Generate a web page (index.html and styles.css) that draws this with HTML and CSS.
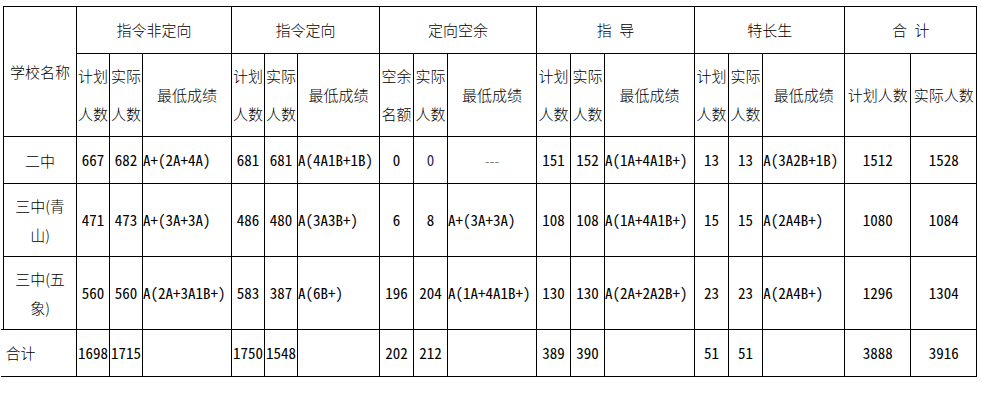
FILE: index.html
```html
<!DOCTYPE html>
<html lang="zh-CN">
<head>
<meta charset="utf-8">
<title>招生统计</title>
<link rel="stylesheet" href="styles.css">
</head>
<body>
<table class="grid">
  <colgroup>
    <col class="w73"><col class="w33"><col class="w33"><col class="w89">
    <col class="w33"><col class="w33"><col class="w82">
    <col class="w34"><col class="w34"><col class="w89">
    <col class="w34"><col class="w34"><col class="w90">
    <col class="w34"><col class="w34"><col class="w82">
    <col class="w66"><col class="w66">
  </colgroup>
  <tr class="r47">
    <td rowspan="2">学校名称</td>
    <td colspan="3">指令非定向</td>
    <td colspan="3">指令定向</td>
    <td colspan="3">定向空余</td>
    <td colspan="3">指&ensp;导</td>
    <td colspan="3">特长生</td>
    <td colspan="2">合&ensp;计</td>
  </tr>
  <tr class="r83">
    <td class="two">计划<br>人数</td><td class="two">实际<br>人数</td><td>最低成绩</td>
    <td class="two">计划<br>人数</td><td class="two">实际<br>人数</td><td>最低成绩</td>
    <td class="two">空余<br>名额</td><td class="two">实际<br>人数</td><td>最低成绩</td>
    <td class="two">计划<br>人数</td><td class="two">实际<br>人数</td><td>最低成绩</td>
    <td class="two">计划<br>人数</td><td class="two">实际<br>人数</td><td>最低成绩</td>
    <td>计划人数</td><td>实际人数</td>
  </tr>
  <tr class="r47">
    <td class="name">二中</td>
    <td class="n">667</td><td class="n">682</td><td class="g">A+(2A+4A)</td>
    <td class="n">681</td><td class="n">681</td><td class="g">A(4A1B+1B)</td>
    <td class="n">0</td><td class="n tint">0</td><td class="soft">---</td>
    <td class="n">151</td><td class="n">152</td><td class="g">A(1A+4A1B+)</td>
    <td class="n">13</td><td class="n">13</td><td class="g">A(3A2B+1B)</td>
    <td class="n">1512</td><td class="n">1528</td>
  </tr>
  <tr class="r73">
    <td class="name">三中(青山)</td>
    <td class="n">471</td><td class="n">473</td><td class="g">A+(3A+3A)</td>
    <td class="n">486</td><td class="n">480</td><td class="g">A(3A3B+)</td>
    <td class="n">6</td><td class="n">8</td><td class="g">A+(3A+3A)</td>
    <td class="n">108</td><td class="n">108</td><td class="g">A(1A+4A1B+)</td>
    <td class="n">15</td><td class="n">15</td><td class="g">A(2A4B+)</td>
    <td class="n">1080</td><td class="n">1084</td>
  </tr>
  <tr class="r73">
    <td class="name">三中(五象)</td>
    <td class="n">560</td><td class="n">560</td><td class="g">A(2A+3A1B+)</td>
    <td class="n">583</td><td class="n">387</td><td class="g">A(6B+)</td>
    <td class="n">196</td><td class="n">204</td><td class="g">A(1A+4A1B+)</td>
    <td class="n">130</td><td class="n">130</td><td class="g">A(2A+2A2B+)</td>
    <td class="n">23</td><td class="n">23</td><td class="g">A(2A4B+)</td>
    <td class="n">1296</td><td class="n">1304</td>
  </tr>
  <tr class="r47">
    <td class="total">合计</td>
    <td class="n">1698</td><td class="n">1715</td><td></td>
    <td class="n">1750</td><td class="n">1548</td><td></td>
    <td class="n">202</td><td class="n">212</td><td></td>
    <td class="n">389</td><td class="n">390</td><td></td>
    <td class="n">51</td><td class="n">51</td><td></td>
    <td class="n">3888</td><td class="n">3916</td>
  </tr>
</table>
</body>
</html>
```
FILE: styles.css
```css
html, body {
  margin: 0;
  padding: 0;
  background: #ffffff;
}

.grid {
  border-collapse: collapse;
  table-layout: fixed;
  width: 974px;
  margin: 6px 0 0 3px;
  font-family: "Noto Sans CJK SC", "Noto Sans", sans-serif;
  font-size: 15px;
  font-weight: 300;
  color: #000000;
}

.grid td {
  border: 1px solid #000000;
  padding: 0;
  text-align: center;
  vertical-align: middle;
  white-space: nowrap;
  overflow: hidden;
  line-height: 18px;
}

.w73 { width: 73px; }
.w33 { width: 33px; }
.w34 { width: 34px; }
.w66 { width: 66px; }
.w82 { width: 82px; }
.w89 { width: 89px; }
.w90 { width: 90px; }

.r47 { height: 47px; }
.r83 { height: 83px; }
.r73 { height: 73px; }

.grid td.two {
  line-height: 38px;
}

.grid td.name {
  white-space: normal;
  padding: 0 5px;
  line-height: 29px;
}

.grid td.n,
.grid td.g {
  font-family: "Noto Sans Mono CJK SC", "DejaVu Sans Mono", monospace;
  font-size: 15px;
}

.grid td.g {
  text-align: left;
}

.grid td.tint {
  color: #2a2a55;
}

.grid td.soft {
  color: #555555;
  font-size: 14px;
}

.grid td.total {
  border-left: none;
  text-align: left;
  padding-left: 2px;
  position: relative;
  overflow: visible;
}

.grid td.total::before,
.grid td.total::after {
  content: "";
  position: absolute;
  left: -3px;
  width: 3px;
  height: 1px;
  background: #000000;
}

.grid td.total::before {
  top: -1px;
}

.grid td.total::after {
  bottom: -1px;
}
```
